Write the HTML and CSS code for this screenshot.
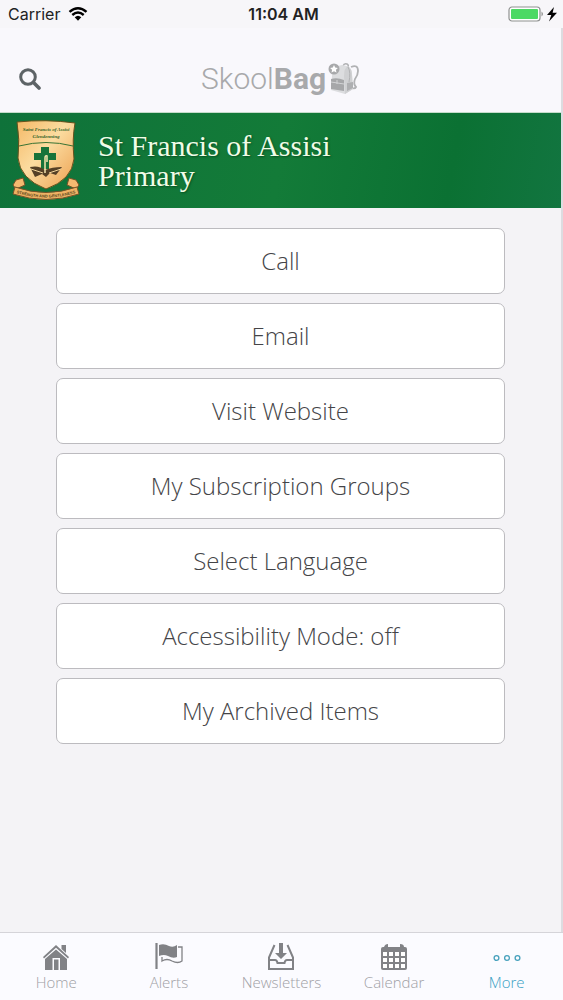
FILE: index.html
```html
<!DOCTYPE html>
<html lang="en">
<head>
<meta charset="utf-8">
<meta name="viewport" content="width=device-width, initial-scale=1">
<title>SkoolBag</title>
<link rel="stylesheet" href="styles.css">
</head>

<body>
  <div class="screen">
    <div class="status">
      <div class="carrier">
        <span>Carrier</span>
        <svg width="20" height="14" viewBox="0 0 20 14">
          <path d="M1.5 4.9 Q10 -2.3 18.500 4.900" fill="none" stroke="#000" stroke-width="2.500"/>
          <path d="M4.300 8 Q10 3 15.700 8" fill="none" stroke="#000" stroke-width="2.400"/>
          <path d="M6.700 10.300 Q10 7 13.300 10.300 L10 13.700 Z" fill="#000"/>
        </svg>
      </div>
      <div class="time">11:04 AM</div>
      <div class="battery">
        <svg width="51" height="16" viewBox="0 0 51 16">
          <rect x="1" y="1" width="31" height="14" rx="3" fill="#fff" stroke="#8f9190" stroke-width="1.200"/>
          <rect x="3" y="3" width="27" height="10" rx="1" fill="#4cd964"/>
          <path d="M33.500 5.500 Q36.500 8 33.500 10.500 Z" fill="#8f9190"/>
          <path d="M46 1 L39 9 H43.300 L41 15.500 L49 6.700 H44.600 Z" fill="#000"/>
        </svg>
      </div>
    </div>

    <div class="content">
      <header>
        <button class="search" aria-label="Search">
          <svg width="22" height="22" viewBox="0 0 22 22" fill="none" stroke="#5d6366">
            <circle cx="9" cy="9" r="7.300" stroke-width="3"/>
            <path d="M14.500 14.500 L20 20" stroke-width="3.600" stroke-linecap="round"/>
          </svg>
        </button>
        <div class="logo">
          <span>Skool<b>Bag</b></span>
          <svg width="32" height="34" viewBox="0 0 32 34">
            <path d="M23 5 Q30 2 30 9 Q30 13 27 17 Q25 22 28 25 Q27 27 24 26" fill="none" stroke="#b1b2b4" stroke-width="1.800"/>
            <path d="M15 4 Q16 1 19 2 Q21 3 20 5" fill="none" stroke="#b1b2b4" stroke-width="1.500"/>
            <path d="M4 14 Q5 4 14 3 L19 4 Q24 6 24 12 L25 27 L17 32 L3 28 Z" fill="#dcdddf"/>
            <path d="M16 14 Q16 6 20 4 Q24 7 24 13 L25 27 L17 32 Z" fill="#cfd0d2"/>
            <path d="M20 5 Q23 10 21 20" fill="none" stroke="#b1b2b4"/>
            <path d="M3 17 Q9 15 16 18 V29 L3 27 Z" fill="#a6a7a9"/>
            <path d="M3 20 L16 22 M9 18 V22" stroke="#d2d3d5" fill="none"/>
            <path d="M19 21 L25 20 V26 L19 29 Z" fill="#aeafb1"/>
            <circle cx="6" cy="7" r="5.500" fill="#a8a9ab"/>
            <path d="M6 3 L7.200 5.600 L9.900 5.900 L7.900 7.800 L8.500 10.500 L6 9.200 L3.500 10.500 L4.100 7.800 L2.100 5.900 L4.800 5.600 Z" fill="#fff"/>
          </svg>
        </div>
      </header>

      <div class="banner">
        <svg class="crest" width="68" height="82" viewBox="0 0 68 82">
          <defs>
            <linearGradient id="gold" x1="0" y1="0" x2="1" y2="1">
              <stop offset="0" stop-color="#f5b866"/>
              <stop offset="0.450" stop-color="#fbdca0"/>
              <stop offset="1" stop-color="#eda050"/>
            </linearGradient>
          </defs>
          <path d="M5 2 Q34 -1 63 3 Q60 19 62 39 Q60 60 34 69 Q8 59 6 38 Q8 19 5 2 Z" fill="url(#gold)" stroke="#65511c"/>
          <path d="M7 26 Q34 19 61 26" fill="none" stroke="#397333"/>
          <text class="crest-name" x="34" y="11" text-anchor="middle">Saint Francis of Assisi</text>
          <text class="crest-name" x="34" y="18" text-anchor="middle">Glendenning</text>
          <path d="M29 27 H37 V33 H44 V40 H37 V49 H29 V40 H22 V33 H29 Z" fill="#17733a"/>
          <path d="M18 47 Q27 45 33 50 Q40 47 50 47 L44 55 L38 53 L34 57 L30 54 L23 57 Z" fill="#554026"/>
          <path d="M19 49 L31 53 M49 49 L37 53" stroke="#f4d69b"/>
          <path d="M33 53 V38 Q33 35 35 36 V42" fill="none" stroke="#f5e5ae" stroke-width="1.500"/>
          <path d="M4 60 L11 58 L13 65 L4 69 L1 65 Z M64 60 L57 58 L55 65 L64 69 L67 65 Z" fill="#f4ba70" stroke="#765127"/>
          <path d="M3 67 Q34 78 65 67 L67 74 Q34 85 1 74 Z" fill="#efb264" stroke="#765127"/>
          <path id="ribbon" d="M1 72 Q34 83 67 72" fill="none"/>
          <text class="crest-motto"><textPath href="#ribbon" startOffset="50%" text-anchor="middle">STRENGTH AND GENTLENESS</textPath></text>
        </svg>
        <h1>St Francis of Assisi<br>Primary</h1>
      </div>

      <main>
        <button>Call</button>
        <button>Email</button>
        <button>Visit Website</button>
        <button>My Subscription Groups</button>
        <button>Select Language</button>
        <button>Accessibility Mode: off</button>
        <button>My Archived Items</button>
      </main>
    </div>

    <nav>
      <a href="#home">
        <svg width="28" height="28" viewBox="0 0 28 28">
          <path d="M14 2 L27 14 L26 15.500 L14 4.800 L2 15.500 L1 14 Z" fill="#818286"/>
          <path d="M19.500 2 H24 V10 L19.500 6 Z" fill="#818286"/>
          <path d="M14 6.500 L25 16 V27 H18 V15 H10.500 V27 H3 V16 Z M12 16.500 H16.500 V27 H12 Z" fill="#818286"/>
        </svg>
        <span>Home</span>
      </a>
      <a href="#alerts">
        <svg width="28" height="28" viewBox="0 0 28 28">
          <path d="M1.500 0 V26" stroke="#818286" stroke-width="2.200"/>
          <path d="M4 2 Q9 0 14 3 Q18 5 22 2 V14 Q18 16 13 13 Q9 11 4 13 Z" fill="#818286"/>
          <path d="M23 4 H27 V18 Q23 21 17 18 Q12 15 7 18 V14" fill="none" stroke="#818286" stroke-width="1.300"/>
        </svg>
        <span>Alerts</span>
      </a>
      <a href="#newsletters">
        <svg width="28" height="28" viewBox="0 0 28 28">
          <path d="M7.500 2 L2 14.500 V26 H26 V14.500 L20.500 2 M2 17 H8 Q10 17 10.500 20 H17.500 Q18 17 20 17 H26" fill="none" stroke="#818286" stroke-width="2"/>
          <path d="M12 0 H16 V10 H20 L14 16 L8 10 H12 Z" fill="#818286"/>
        </svg>
        <span>Newsletters</span>
      </a>
      <a href="#calendar">
        <svg width="28" height="28" viewBox="0 0 28 28">
          <rect x="1" y="4" width="26" height="23" rx="2" fill="#818286"/>
          <path d="M4 4 Q5 1 8 1 V5 M20 4 V1 Q24 1 24 4" fill="#818286"/>
          <path d="M3 9 H7 V13 H3 Z M9 9 H13 V13 H9 Z M15 9 H19 V13 H15 Z M21 9 H25 V13 H21 Z" fill="#fff"/>
          <path d="M3 15 H7 V19 H3 Z M9 15 H13 V19 H9 Z M15 15 H19 V19 H15 Z M21 15 H25 V19 H21 Z" fill="#fff"/>
          <path d="M3 21 H7 V25 H3 Z M9 21 H13 V25 H9 Z M15 21 H19 V25 H15 Z M21 21 H25 V25 H21 Z" fill="#fff"/>
        </svg>
        <span>Calendar</span>
      </a>
      <a href="#more" class="active">
        <svg width="28" height="28" viewBox="0 0 28 28" fill="none" stroke="#45a0bc" stroke-width="1.300">
          <circle cx="3.500" cy="15" r="2.400"/>
          <circle cx="14" cy="15" r="2.400"/>
          <circle cx="24.500" cy="15" r="2.400"/>
        </svg>
        <span>More</span>
      </a>
    </nav>
  </div>
</body>
</html>
```

FILE: styles.css
```css
* {
  box-sizing: border-box;
}
body {
  margin: 0;
  background: #f9f8fc;
  font-family: "Open Sans", sans-serif;
}
button {
  padding: 0;
  font-family: inherit;
  cursor: pointer;
}
svg {
  display: block;
}
.screen {
  display: flex;
  flex-direction: column;
  min-height: 100vh;
}

.status {
  display: grid;
  grid-template-columns: 1fr auto 1fr;
  align-items: center;
  height: 28px;
  padding: 0 4px 0 8px;
  background: #f7f6f9;
  font-family: Inter, sans-serif;
  font-size: 16px;
  color: #222;
}
.carrier {
  display: flex;
  align-items: center;
  gap: 8px;
}
.time {
  font-weight: 600;
}
.battery {
  justify-self: end;
}

.content {
  display: flex;
  flex: 1;
  flex-direction: column;
  border-right: 2px solid #dddce0;
}
header {
  display: grid;
  grid-template-columns: 1fr auto 1fr;
  align-items: center;
  height: 85px;
  padding: 18px 19px 0;
  border-bottom: 1px solid #c5dccb;
}
.search {
  justify-self: start;
  border: 0;
  background: none;
}
.logo {
  display: flex;
  align-items: center;
  gap: 2px;
  font-family: Roboto, sans-serif;
  font-size: 30px;
  line-height: 34px;
  font-weight: 300;
  color: #a8a9ab;
}
.logo b {
  font-weight: 700;
}

.banner {
  display: flex;
  align-items: center;
  gap: 18px;
  height: 95px;
  padding: 0 12px;
  background: linear-gradient(100deg, #0f723a, #137b38 50%, #0b7133 80%, #127540);
}
.crest {
  flex: none;
}
.crest-name {
  font: italic bold 5px "Liberation Serif", serif;
  fill: #315f27;
}
.crest-motto {
  font: bold 4px "Liberation Sans", sans-serif;
  fill: #59471d;
}
h1 {
  margin: 0;
  font-family: "Liberation Serif", serif;
  font-size: 30px;
  line-height: 30px;
  font-weight: 400;
  color: #f0fce8;
  text-shadow: 1px 1px 2px #075020;
}

main {
  display: flex;
  flex: 1;
  flex-direction: column;
  gap: 9px;
  padding: 20px 10% 24px;
  background: #f4f3f6;
}
main button {
  height: 66px;
  padding-bottom: 2px;
  border: 1px solid #bcbbbf;
  border-radius: 7px;
  background: #fff;
  color: #444447;
  font-size: 24px;
  font-weight: 300;
}

nav {
  display: grid;
  grid-template-columns: repeat(5, 1fr);
  height: 68px;
  border-top: 1px solid #d5d4d9;
  background: #fbfbff;
}
nav a {
  display: flex;
  flex-direction: column;
  align-items: center;
  padding-top: 10px;
  color: #a0a0a5;
  font-size: 15px;
  line-height: 22px;
  text-decoration: none;
}
nav span {
  font-weight: 300;
}
nav .active {
  color: #38a0c3;
}
```
